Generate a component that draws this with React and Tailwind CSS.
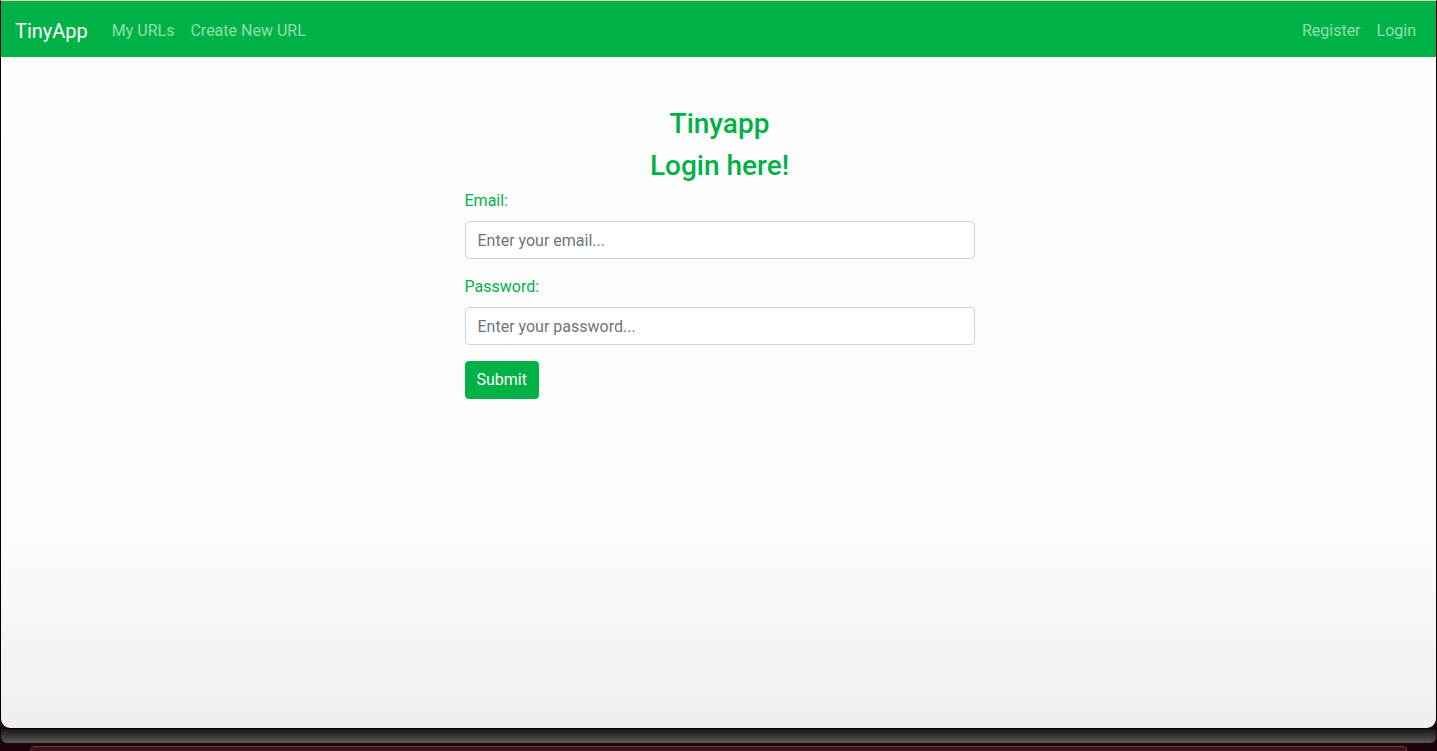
import { useState } from "react";

const GREEN = "bg-[#00b246]";

function NavBar() {
  return (
    <nav className={`flex h-[56px] items-center justify-between ${GREEN} pb-0 pl-[14px] pr-3 pt-[4px]`}>
      <div className="flex items-center">
        <a className="mr-4 text-[20px] leading-[30px] text-white">TinyApp</a>
        <a className="px-2 text-[16px] leading-6 text-white/55">My URLs</a>
        <a className="px-2 text-[16px] leading-6 text-white/55">Create New URL</a>
      </div>
      <div className="flex items-center">
        <a className="px-2 text-[16px] leading-6 text-white/55">Register</a>
        <a className="px-2 text-[16px] leading-6 text-white/55">Login</a>
      </div>
    </nav>
  );
}

function LoginForm() {
  const [email, setEmail] = useState("");
  const [password, setPassword] = useState("");

  return (
    <div className="flex justify-center pl-[2px] pt-[50px]">
      <div className="w-[510px]">
        <h3 className="mb-2 text-center text-[28px] font-medium leading-[34px] text-[#00b246]">Tinyapp</h3>
        <h3 className="mb-[6px] text-center text-[28px] font-medium leading-[34px] text-[#00b246]">Login here!</h3>
        <form onSubmit={(e) => e.preventDefault()}>
          <div className="mb-4">
            <label className="mb-2 block text-[16px] leading-6 text-[#00b246]">Email:</label>
            <input
              type="email"
              value={email}
              onChange={(e) => setEmail(e.target.value)}
              placeholder="Enter your email..."
              className="block h-[38px] w-full rounded-[4px] border border-[#ced4da] bg-white px-3 text-[16px] text-[#495057] placeholder:text-[#6c757d] outline-none"
            />
          </div>
          <div className="mb-4">
            <label className="mb-2 block text-[16px] leading-6 text-[#00b246]">Password:</label>
            <input
              type="password"
              value={password}
              onChange={(e) => setPassword(e.target.value)}
              placeholder="Enter your password..."
              className="block h-[38px] w-full rounded-[4px] border border-[#ced4da] bg-white px-3 text-[16px] text-[#495057] placeholder:text-[#6c757d] outline-none"
            />
          </div>
          <button type="submit" className={`h-[38px] rounded-[4px] ${GREEN} px-3 text-[16px] text-white`}>
            Submit
          </button>
        </form>
      </div>
    </div>
  );
}

export default function App() {
  return (
    <div className="flex h-[751px] w-full flex-col overflow-hidden bg-[#1c0307] font-['Roboto','Liberation_Sans',sans-serif]">
      {/* browser window */}
      <div className="h-[729px] shrink-0 overflow-hidden rounded-b-[10px] border-b border-l border-r border-black border-t border-t-[#e9c9c4] bg-gradient-to-b from-white via-[#fbfbfb] via-75% to-[#efefef]">
        <NavBar />
        <LoginForm />
      </div>
      {/* window shadow */}
      <div className="mx-[1px] h-[14px] shrink-0 rounded-b-[6px] bg-gradient-to-b from-[#181818] to-[#5a5a5a]" />
      {/* dock */}
      <div className="flex-1 px-[30px] pt-[3px]">
        <div className="h-full rounded-t-[8px] border-t border-l border-r border-[#6a3a44] bg-[#3c121c]" />
      </div>
    </div>
  );
}
